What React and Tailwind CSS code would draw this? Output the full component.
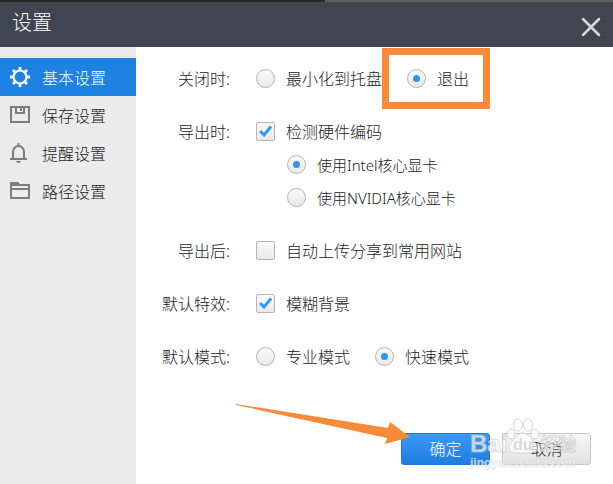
import { useState } from "react";

const menu = [
  { id: "basic", label: "基本设置", icon: GearIcon },
  { id: "save", label: "保存设置", icon: SaveIcon },
  { id: "remind", label: "提醒设置", icon: BellIcon },
  { id: "path", label: "路径设置", icon: FolderIcon },
];

function GearIcon() {
  return (
    <svg width="20" height="20" viewBox="0 0 20 20" fill="none" stroke="currentColor">
      <circle cx="10" cy="10" r="6.500" strokeWidth="2.2" />
      <path
        d="M10 0v3M10 17v3M0 10h3M17 10h3M3 3l2 2M15 15l2 2M3 17l2-2M15 5l2-2"
        strokeWidth="2.8"
      />
    </svg>
  );
}

function SaveIcon() {
  return (
    <svg width="20" height="20" viewBox="0 0 20 20" fill="none" stroke="currentColor" strokeWidth="2">
      <path d="M1 2h18v15H1z" />
      <path d="M6 2v6h8V2" />
      <path d="M11 2v4" />
    </svg>
  );
}

function BellIcon() {
  return (
    <svg width="20" height="20" viewBox="0 0 20 20" fill="none" stroke="currentColor" strokeWidth="2">
      <path d="M3 16V9a5.500 6 0 0 1 11 0v7" />
      <path d="M0 16h17M8.500 0v3" />
      <path d="M6 18h5l-1.500 2h-2z" fill="currentColor" stroke="none" />
    </svg>
  );
}

function FolderIcon() {
  return (
    <svg width="20" height="20" viewBox="0 0 20 20" fill="none" stroke="currentColor" strokeWidth="2">
      <path d="M0 5V1h8l2 2h10v2z" fill="currentColor" stroke="none" />
      <path d="M1 4v13h18V4" />
      <path d="M1 8h18" />
    </svg>
  );
}

function Radio({ small, className = "", children, mark, ...props }) {
  return (
    <label className={`flex h-5 items-center gap-[11px] whitespace-nowrap ${small ? "text-[15px]" : "text-base"} ${className}`}>
      <span className="grid size-[19px] shrink-0 place-items-center">
        <input
          type="radio"
          className="peer col-start-1 row-start-1 size-[19px] appearance-none rounded-full border border-[#b4b4b4] bg-linear-to-b from-[#fafafa] to-[#e9e9e9]"
          {...props}
        />
        <span className="pointer-events-none col-start-1 row-start-1 hidden size-[7px] rounded-full bg-[#2f92f6] peer-checked:block" />
      </span>
      <span className="pt-0.5">{children}</span>
      {mark}
    </label>
  );
}

function Checkbox({ children, ...props }) {
  return (
    <label className="flex h-5 items-center gap-[11px] whitespace-nowrap">
      <span className="grid size-[19px] shrink-0 place-items-center">
        <input
          type="checkbox"
          className="peer col-start-1 row-start-1 size-[19px] appearance-none rounded-[2px] border border-[#b4b4b4] bg-linear-to-b from-[#fafafa] to-[#e9e9e9]"
          {...props}
        />
        <svg
          className="pointer-events-none col-start-1 row-start-1 hidden peer-checked:block"
          width="13"
          height="13"
          viewBox="0 0 13 13"
          fill="none"
          stroke="#3398fb"
          strokeWidth="3"
        >
          <path d="M1 6l4 4L12 1.500" />
        </svg>
      </span>
      <span className="pt-0.5">{children}</span>
    </label>
  );
}

function Row({ label, children }) {
  return (
    <div role="group" aria-label={label} className="flex gap-[26px]">
      <span className="h-5 w-[68px] shrink-0 text-right leading-[22px] whitespace-nowrap">{label}:</span>
      {children}
    </div>
  );
}

function Watermark() {
  return (
    <svg
      className="pointer-events-none absolute -top-4 right-[11px] font-['Liberation_Sans','Noto_Sans_CJK_SC',sans-serif] font-bold"
      width="110"
      height="62"
      viewBox="0 0 110 62"
      fill="#fff"
      fillOpacity="0.7"
      stroke="#bbb"
      strokeOpacity="0.6"
      strokeWidth="1"
    >
      <text x="0" y="35" fontSize="24">Bai</text>
      <text x="70" y="34" fontSize="18">经验</text>
      <ellipse cx="41" cy="17" rx="4" ry="5" />
      <ellipse cx="48" cy="8" rx="4.500" ry="6" />
      <ellipse cx="58" cy="8" rx="4.500" ry="6" />
      <ellipse cx="65" cy="17" rx="4" ry="5" />
      <path d="M53 16c5 0 7 5 10 8 6 4 6 12-2 12H45c-8 0-8-8-2-12 3-3 5-8 10-8z" />
      <text x="43" y="33" fontSize="16" fill="#ccc" stroke="none">du</text>
      <text x="0" y="50" fontSize="12" stroke="#bbb" strokeOpacity="0.3">jingyan.baidu.com</text>
    </svg>
  );
}

export default function App() {
  const [active, setActive] = useState("basic");
  const [closeMode, setCloseMode] = useState("exit");
  const [gpu, setGpu] = useState("intel");
  const [mode, setMode] = useState("fast");

  return (
    <div className="flex min-h-screen flex-col bg-white font-['Noto_Sans','Noto_Sans_CJK_SC',sans-serif] text-base font-light text-[#222]">
      <div className="flex h-[2px]">
        <div className="w-[53%] bg-[#262626]" />
        <div className="flex-1 bg-[#625f5e]" />
      </div>
      <header className="flex h-[45px] items-center justify-between bg-[#3f4651] px-3 text-white">
        <h1 className="pb-1 text-xl leading-7">设置</h1>
        <button type="button" aria-label="关闭" className="pt-1">
          <svg width="20" height="20" viewBox="0 0 20 20" stroke="#d8d8d8" strokeWidth="2.500" strokeLinecap="round">
            <path d="M2 2l16 16M18 2L2 18" />
          </svg>
        </button>
      </header>

      <div className="flex flex-1">
        <nav className="w-[136px] shrink-0 bg-[#ebebeb] pt-[11px]">
          {menu.map(({ id, label, icon: Icon }) => (
            <button
              key={id}
              type="button"
              onClick={() => setActive(id)}
              className={`flex h-[38px] w-full items-center gap-3 pl-[10px] ${active === id ? "bg-[#1e82e3] text-white" : ""}`}
            >
              <span className={active === id ? "text-white" : "text-[#7d7d7d]"}>
                <Icon />
              </span>
              <span className="pt-0.5">{label}</span>
            </button>
          ))}
        </nav>

        <main className="flex flex-1 flex-col">
          <form className="flex flex-col gap-[33px] pt-[21px] pl-[26px]">
            <Row label="关闭时">
              <div className="flex gap-[25px]">
                <Radio name="close" checked={closeMode === "tray"} onChange={() => setCloseMode("tray")}>
                  最小化到托盘
                </Radio>
                <Radio
                  name="close"
                  className="relative"
                  checked={closeMode === "exit"}
                  onChange={() => setCloseMode("exit")}
                  mark={<span className="absolute -top-5 -right-[21px] -bottom-[21px] -left-[25px] border-[7px] border-[#f98a38]" />}
                >
                  退出
                </Radio>
              </div>
            </Row>

            <Row label="导出时">
              <div className="flex flex-col gap-[13px]">
                <Checkbox defaultChecked>检测硬件编码</Checkbox>
                <Radio small name="gpu" className="pl-[31px]" checked={gpu === "intel"} onChange={() => setGpu("intel")}>
                  使用Intel核心显卡
                </Radio>
                <Radio small name="gpu" className="pl-[31px]" checked={gpu === "nvidia"} onChange={() => setGpu("nvidia")}>
                  使用NVIDIA核心显卡
                </Radio>
              </div>
            </Row>

            <Row label="导出后">
              <Checkbox>自动上传分享到常用网站</Checkbox>
            </Row>

            <Row label="默认特效">
              <Checkbox defaultChecked>模糊背景</Checkbox>
            </Row>

            <Row label="默认模式">
              <div className="flex gap-[25px]">
                <Radio name="mode" checked={mode === "pro"} onChange={() => setMode("pro")}>
                  专业模式
                </Radio>
                <Radio name="mode" checked={mode === "fast"} onChange={() => setMode("fast")}>
                  快速模式
                </Radio>
              </div>
            </Row>
          </form>

          <footer className="mt-auto flex justify-end pr-[22px] pb-[19px]">
            <div className="relative flex gap-3">
              <button
                type="button"
                className="h-8 w-[89px] rounded-[3px] border border-[#1c79d4] bg-linear-to-b from-[#3b98f7] to-[#1b7ee0] text-white"
              >
                确定
              </button>
              <button
                type="button"
                className="h-8 w-[89px] rounded-[3px] border border-[#c6c6c6] bg-linear-to-b from-[#f6f6f6] to-[#e2e2e2]"
              >
                取消
              </button>
              <svg
                className="pointer-events-none absolute -top-8 right-[180px]"
                width="176"
                height="48"
                viewBox="0 0 176 48"
                fill="#f98a38"
              >
                <path d="M1 3l0 1 151 33-2 6 25-7-20-15-2 6z" />
              </svg>
              <Watermark />
            </div>
          </footer>
        </main>
      </div>
    </div>
  );
}
